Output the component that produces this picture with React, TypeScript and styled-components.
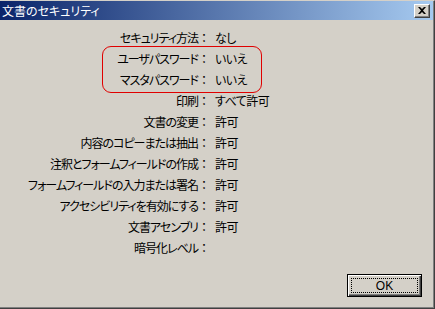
import { Fragment } from "react";
import styled, { createGlobalStyle } from "styled-components";

const GlobalStyle = createGlobalStyle`
  html, body {
    margin: 0;
    padding: 0;
    background: #d4d0c8;
  }
  body {
    font-family: "Noto Sans CJK JP", "Noto Sans", sans-serif;
    font-size: 12px;
    color: #000;
  }
`;

const Window = styled.div`
  position: relative;
  width: 435px;
  height: 309px;
  box-sizing: border-box;
  background: #d4d0c8;
  border-top: 1px solid #d4d0c8;
  border-right: 1px solid #404040;
  border-bottom: 1px solid #404040;
  box-shadow: inset -1px -1px 0 #808080;
  display: flex;
  flex-direction: column;
`;

const TitleBar = styled.div`
  height: 19px;
  margin-right: 1px;
  background: linear-gradient(to right, #0a246a, #a6caf0);
  display: flex;
  align-items: center;
  justify-content: space-between;
  padding: 0 3px 0 2px;
`;

const Title = styled.span`
  color: #fff;
  font-size: 12px;
  line-height: 19px;
  font-feature-settings: "palt";
`;

const CloseButton = styled.div`
  width: 16px;
  height: 14px;
  box-sizing: border-box;
  background: #d4d0c8;
  border-top: 1px solid #fff;
  border-left: 1px solid #fff;
  border-right: 1px solid #404040;
  border-bottom: 1px solid #404040;
  box-shadow: inset -1px -1px 0 #808080;
  display: flex;
  align-items: center;
  justify-content: center;
`;

const Body = styled.div`
  flex: 1;
  display: flex;
  flex-direction: column;
  padding-top: 7px;
`;

const Table = styled.div`
  display: grid;
  grid-template-columns: 198px 12px auto;
  grid-auto-rows: 21px;
  align-items: center;
  font-feature-settings: "palt";
`;

const Label = styled.span`
  text-align: right;
  white-space: nowrap;
  letter-spacing: -1px;
`;

const Colon = styled.span`
  text-align: center;
`;

const Value = styled.span`
  padding-left: 5px;
  white-space: nowrap;
  letter-spacing: -0.5px;
`;

const Highlight = styled.div`
  position: absolute;
  left: 102px;
  top: 45px;
  width: 160px;
  height: 47px;
  box-sizing: border-box;
  border: 1px solid #e00000;
  border-radius: 9px;
  pointer-events: none;
`;

const Footer = styled.div`
  margin-top: auto;
  display: flex;
  justify-content: flex-end;
  padding: 0 12px 11px 0;
`;

const OkButton = styled.button`
  width: 75px;
  height: 23px;
  box-sizing: border-box;
  padding: 3px;
  background: #d4d0c8;
  border: 1px solid #000;
  box-shadow: inset 1px 1px 0 #fff, inset -1px -1px 0 #404040,
    inset -2px -2px 0 #808080;
  font-family: "Liberation Sans", "Noto Sans", sans-serif;
  font-size: 12px;
  color: #000;
`;

const Focus = styled.div`
  height: 100%;
  box-sizing: border-box;
  border: 1px dotted #000;
  display: flex;
  align-items: center;
  justify-content: center;
`;

const rows: [string, string][] = [
  ["セキュリティ方法", "なし"],
  ["ユーザパスワード", "いいえ"],
  ["マスタパスワード", "いいえ"],
  ["印刷", "すべて許可"],
  ["文書の変更", "許可"],
  ["内容のコピーまたは抽出", "許可"],
  ["注釈とフォームフィールドの作成", "許可"],
  ["フォームフィールドの入力または署名", "許可"],
  ["アクセシビリティを有効にする", "許可"],
  ["文書アセンブリ", "許可"],
  ["暗号化レベル", ""],
];

export default function App() {
  return (
    <>
      <GlobalStyle />
      <Window>
        <TitleBar>
          <Title>文書のセキュリティ</Title>
          <CloseButton>
            <svg width="8" height="7" viewBox="0 0 8 7">
              <path
                d="M0 0h2l2 2 2-2h2L5 3.5 8 7H6L4 5 2 7H0l3-3.5z"
                fill="#000"
              />
            </svg>
          </CloseButton>
        </TitleBar>
        <Body>
          <Table>
            {rows.map(([label, value]) => (
              <Fragment key={label}>
                <Label>{label}</Label>
                <Colon>：</Colon>
                <Value>{value}</Value>
              </Fragment>
            ))}
          </Table>
          <Footer>
            <OkButton>
              <Focus>OK</Focus>
            </OkButton>
          </Footer>
        </Body>
        <Highlight />
      </Window>
    </>
  );
}
